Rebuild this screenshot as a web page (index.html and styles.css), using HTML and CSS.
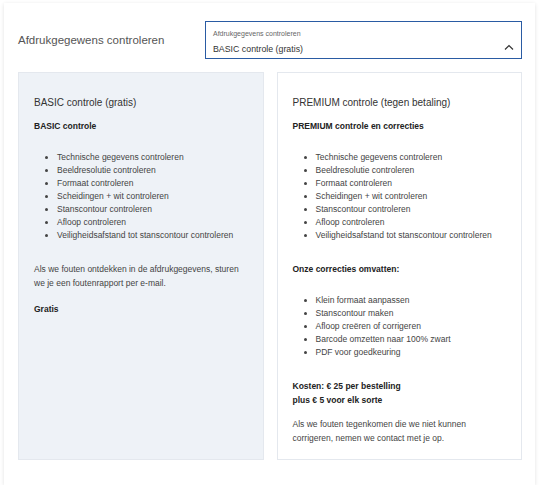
FILE: index.html
```html
<!DOCTYPE html>
<html lang="nl">
<head>
<meta charset="utf-8">
<link rel="stylesheet" href="styles.css">
</head>
<body>
<div class="card">
  <div class="header">
    <div class="title">Afdrukgegewens controleren</div>
    <div class="select">
      <div class="select-label">Afdrukgegevens controleren</div>
      <div class="select-value">BASIC controle (gratis)</div>
      <svg class="chevron" width="10" height="6" viewBox="0 0 10 6"><path d="M1 5.5 L5 1.5 L9 5.5" fill="none" stroke="#333" stroke-width="1.2"/></svg>
    </div>
  </div>
  <div class="panels">
    <div class="panel basic">
      <h2 class="panel-title">BASIC controle (gratis)</h2>
      <p class="strong">BASIC controle</p>
      <ul class="list">
        <li>Technische gegevens controleren</li>
        <li>Beeldresolutie controleren</li>
        <li>Formaat controleren</li>
        <li>Scheidingen + wit controleren</li>
        <li>Stanscontour controleren</li>
        <li>Afloop controleren</li>
        <li>Veiligheidsafstand tot stanscontour controleren</li>
      </ul>
      <p class="text">Als we fouten ontdekken in de afdrukgegevens, sturen we je een foutenrapport per e-mail.</p>
      <p class="strong">Gratis</p>
    </div>
    <div class="panel premium">
      <h2 class="panel-title">PREMIUM controle (tegen betaling)</h2>
      <p class="strong">PREMIUM controle en correcties</p>
      <ul class="list">
        <li>Technische gegevens controleren</li>
        <li>Beeldresolutie controleren</li>
        <li>Formaat controleren</li>
        <li>Scheidingen + wit controleren</li>
        <li>Stanscontour controleren</li>
        <li>Afloop controleren</li>
        <li>Veiligheidsafstand tot stanscontour controleren</li>
      </ul>
      <p class="strong">Onze correcties omvatten:</p>
      <ul class="list">
        <li>Klein formaat aanpassen</li>
        <li>Stanscontour maken</li>
        <li>Afloop creëren of corrigeren</li>
        <li>Barcode omzetten naar 100% zwart</li>
        <li>PDF voor goedkeuring</li>
      </ul>
      <p class="strong">Kosten: € 25 per bestelling<br>plus € 5 voor elk sorte</p>
      <p class="text">Als we fouten tegenkomen die we niet kunnen corrigeren, nemen we contact met je op.</p>
    </div>
  </div>
</div>
</body>
</html>
```
FILE: styles.css
```css
html, body {
  margin: 0;
  padding: 0;
  background: #ffffff;
}
body {
  font-family: "Liberation Sans", Arial, sans-serif;
  color: #333;
}
.card {
  box-sizing: border-box;
  margin: 3px 5px 0 4px;
  width: 531px;
  height: 482px;
  padding: 18px 13px 25px 14px;
  background: #fff;
  box-shadow: 0 1px 4px rgba(0, 0, 0, 0.12);
}
.header {
  display: flex;
  align-items: center;
  justify-content: space-between;
  height: 38px;
}
.title {
  font-size: 11.5px;
  color: #555;
}
.select {
  box-sizing: border-box;
  position: relative;
  width: 317px;
  height: 38px;
  border: 1px solid #2a5ba3;
  padding: 7px 0 0 7px;
}
.select-label {
  font-size: 7px;
  color: #666;
  line-height: 10px;
}
.select-value {
  font-size: 8.8px;
  color: #333;
  line-height: 13px;
  margin-top: 4px;
}
.chevron {
  position: absolute;
  right: 7px;
  top: 22px;
}
.panels {
  display: flex;
  gap: 13px;
  margin-top: 13px;
  height: 388px;
}
.panel {
  box-sizing: border-box;
  flex: 1;
  padding: 22px 15px 15px 15px;
  border: 1px solid #e4e8ee;
  font-size: 8.5px;
  line-height: 14px;
}
.basic {
  background: #eef2f7;
}
.premium {
  background: #fff;
}
.panel-title {
  margin: 0;
  font-size: 10px;
  font-weight: normal;
  line-height: 16px;
  color: #333;
}
.strong {
  margin: 8px 0 0 0;
  font-weight: bold;
  color: #222;
}
.list {
  margin: 18px 0 0 0;
  padding-left: 23px;
  line-height: 13px;
  color: #444;
}
.list + .strong, .list + .text {
  margin-top: 20px;
}
.text {
  margin: 12px 0 0 0;
  color: #444;
}
.strong + .text {
  margin-top: 10px;
}
.text + .strong {
  margin-top: 12px;
}
```
